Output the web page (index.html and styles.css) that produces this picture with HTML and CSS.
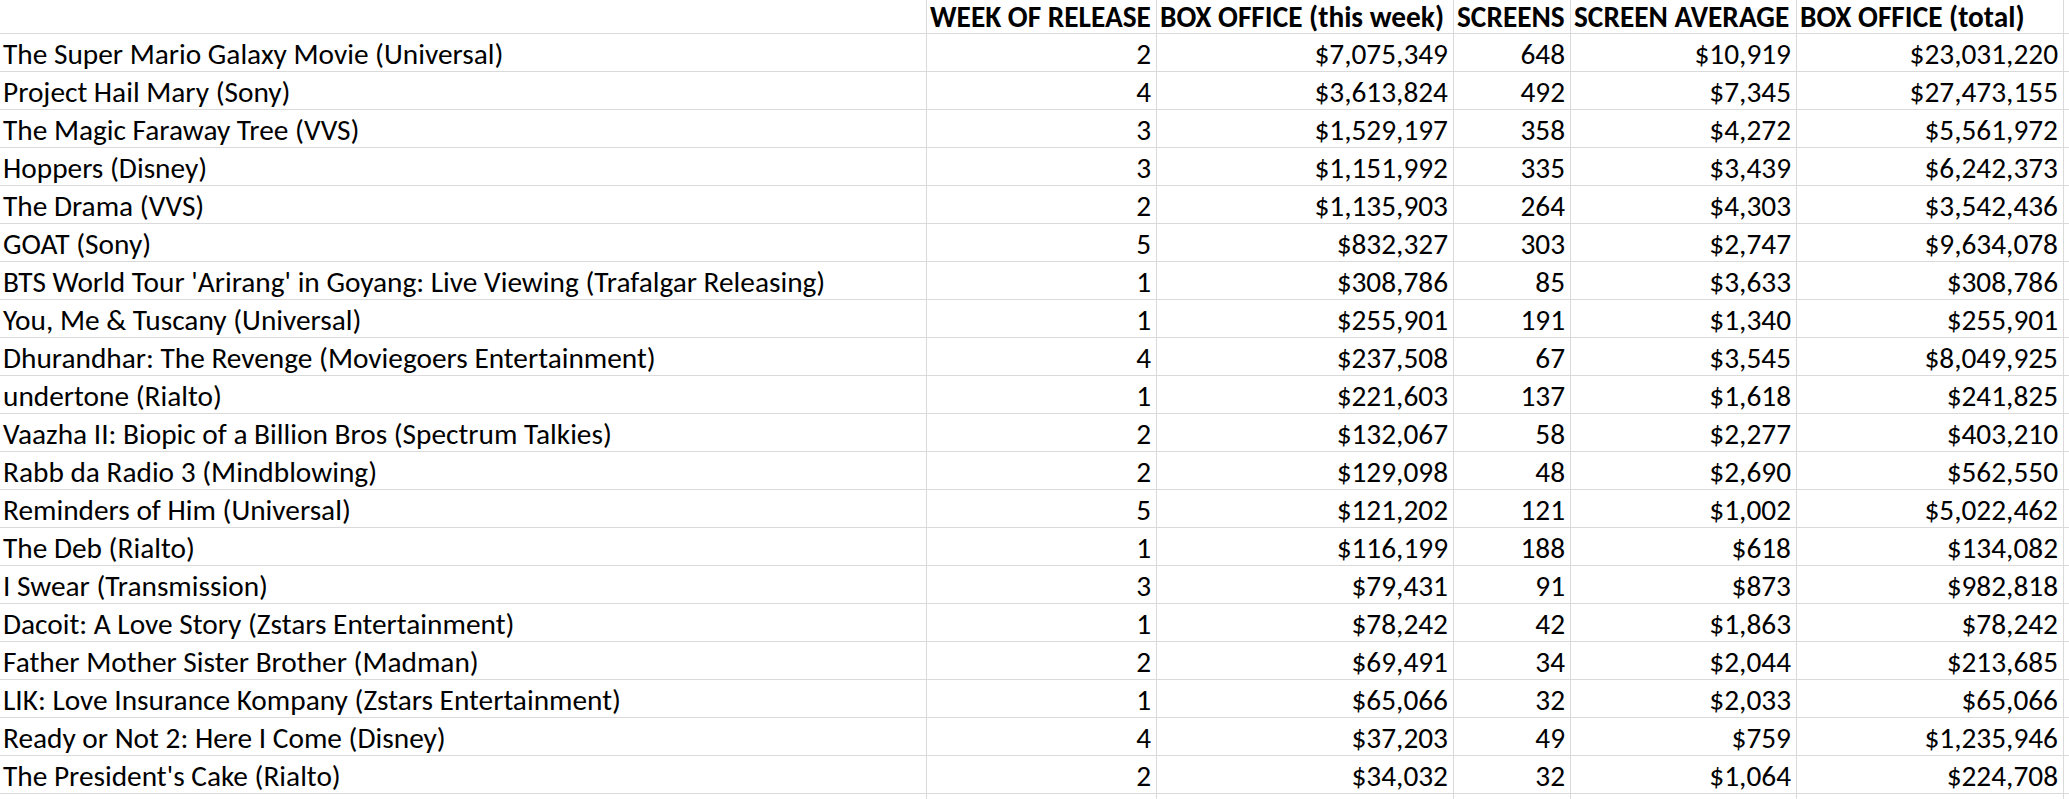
FILE: index.html
```html
<!DOCTYPE html>
<html lang="en">
<head>
<meta charset="utf-8">
<title>Box Office</title>
<link rel="stylesheet" href="styles.css">
</head>
<body>
<div class="sheet">
  <div class="row head">
    <div class="cell"></div>
    <div class="cell">WEEK OF RELEASE</div>
    <div class="cell">BOX OFFICE (this week)</div>
    <div class="cell">SCREENS</div>
    <div class="cell">SCREEN AVERAGE</div>
    <div class="cell">BOX OFFICE (total)</div>
    <div class="cell"></div>
  </div>
  <div class="row"><div class="cell">The Super Mario Galaxy Movie (Universal)</div><div class="cell num">2</div><div class="cell num">$7,075,349</div><div class="cell num">648</div><div class="cell num">$10,919</div><div class="cell num">$23,031,220</div><div class="cell"></div></div>
  <div class="row"><div class="cell">Project Hail Mary (Sony)</div><div class="cell num">4</div><div class="cell num">$3,613,824</div><div class="cell num">492</div><div class="cell num">$7,345</div><div class="cell num">$27,473,155</div><div class="cell"></div></div>
  <div class="row"><div class="cell">The Magic Faraway Tree (VVS)</div><div class="cell num">3</div><div class="cell num">$1,529,197</div><div class="cell num">358</div><div class="cell num">$4,272</div><div class="cell num">$5,561,972</div><div class="cell"></div></div>
  <div class="row"><div class="cell">Hoppers (Disney)</div><div class="cell num">3</div><div class="cell num">$1,151,992</div><div class="cell num">335</div><div class="cell num">$3,439</div><div class="cell num">$6,242,373</div><div class="cell"></div></div>
  <div class="row"><div class="cell">The Drama (VVS)</div><div class="cell num">2</div><div class="cell num">$1,135,903</div><div class="cell num">264</div><div class="cell num">$4,303</div><div class="cell num">$3,542,436</div><div class="cell"></div></div>
  <div class="row"><div class="cell">GOAT (Sony)</div><div class="cell num">5</div><div class="cell num">$832,327</div><div class="cell num">303</div><div class="cell num">$2,747</div><div class="cell num">$9,634,078</div><div class="cell"></div></div>
  <div class="row"><div class="cell">BTS World Tour 'Arirang' in Goyang: Live Viewing (Trafalgar Releasing)</div><div class="cell num">1</div><div class="cell num">$308,786</div><div class="cell num">85</div><div class="cell num">$3,633</div><div class="cell num">$308,786</div><div class="cell"></div></div>
  <div class="row"><div class="cell">You, Me &amp; Tuscany (Universal)</div><div class="cell num">1</div><div class="cell num">$255,901</div><div class="cell num">191</div><div class="cell num">$1,340</div><div class="cell num">$255,901</div><div class="cell"></div></div>
  <div class="row"><div class="cell">Dhurandhar: The Revenge (Moviegoers Entertainment)</div><div class="cell num">4</div><div class="cell num">$237,508</div><div class="cell num">67</div><div class="cell num">$3,545</div><div class="cell num">$8,049,925</div><div class="cell"></div></div>
  <div class="row"><div class="cell">undertone (Rialto)</div><div class="cell num">1</div><div class="cell num">$221,603</div><div class="cell num">137</div><div class="cell num">$1,618</div><div class="cell num">$241,825</div><div class="cell"></div></div>
  <div class="row"><div class="cell">Vaazha II: Biopic of a Billion Bros (Spectrum Talkies)</div><div class="cell num">2</div><div class="cell num">$132,067</div><div class="cell num">58</div><div class="cell num">$2,277</div><div class="cell num">$403,210</div><div class="cell"></div></div>
  <div class="row"><div class="cell">Rabb da Radio 3 (Mindblowing)</div><div class="cell num">2</div><div class="cell num">$129,098</div><div class="cell num">48</div><div class="cell num">$2,690</div><div class="cell num">$562,550</div><div class="cell"></div></div>
  <div class="row"><div class="cell">Reminders of Him (Universal)</div><div class="cell num">5</div><div class="cell num">$121,202</div><div class="cell num">121</div><div class="cell num">$1,002</div><div class="cell num">$5,022,462</div><div class="cell"></div></div>
  <div class="row"><div class="cell">The Deb (Rialto)</div><div class="cell num">1</div><div class="cell num">$116,199</div><div class="cell num">188</div><div class="cell num">$618</div><div class="cell num">$134,082</div><div class="cell"></div></div>
  <div class="row"><div class="cell">I Swear (Transmission)</div><div class="cell num">3</div><div class="cell num">$79,431</div><div class="cell num">91</div><div class="cell num">$873</div><div class="cell num">$982,818</div><div class="cell"></div></div>
  <div class="row"><div class="cell">Dacoit: A Love Story (Zstars Entertainment)</div><div class="cell num">1</div><div class="cell num">$78,242</div><div class="cell num">42</div><div class="cell num">$1,863</div><div class="cell num">$78,242</div><div class="cell"></div></div>
  <div class="row"><div class="cell">Father Mother Sister Brother (Madman)</div><div class="cell num">2</div><div class="cell num">$69,491</div><div class="cell num">34</div><div class="cell num">$2,044</div><div class="cell num">$213,685</div><div class="cell"></div></div>
  <div class="row"><div class="cell">LIK: Love Insurance Kompany (Zstars Entertainment)</div><div class="cell num">1</div><div class="cell num">$65,066</div><div class="cell num">32</div><div class="cell num">$2,033</div><div class="cell num">$65,066</div><div class="cell"></div></div>
  <div class="row"><div class="cell">Ready or Not 2: Here I Come (Disney)</div><div class="cell num">4</div><div class="cell num">$37,203</div><div class="cell num">49</div><div class="cell num">$759</div><div class="cell num">$1,235,946</div><div class="cell"></div></div>
  <div class="row"><div class="cell">The President's Cake (Rialto)</div><div class="cell num">2</div><div class="cell num">$34,032</div><div class="cell num">32</div><div class="cell num">$1,064</div><div class="cell num">$224,708</div><div class="cell"></div></div>
  <div class="row"><div class="cell"></div><div class="cell"></div><div class="cell"></div><div class="cell"></div><div class="cell"></div><div class="cell"></div><div class="cell"></div></div>
</div>
</body>
</html>
```
FILE: styles.css
```css
html, body {
  margin: 0;
  padding: 0;
  background: #ffffff;
}
body {
  width: 2069px;
  height: 799px;
  overflow: hidden;
  font-family: "Carlito", "Lato", "Liberation Sans", sans-serif;
  font-size: 29.33px;
  color: #000000;
}
.sheet {
  display: flex;
  flex-direction: column;
}
.row {
  display: grid;
  grid-template-columns: 927px 230px 297px 117px 226px 267px 1fr;
  height: 38px;
}
.row.head {
  height: 34px;
}
.cell {
  box-sizing: border-box;
  border-right: 1px solid #dadada;
  border-bottom: 1px solid #dadada;
  padding: 5px 5px 0 3px;
  line-height: 30px;
  white-space: nowrap;
}
.head .cell {
  font-weight: bold;
  padding-top: 2px;
}
.num {
  text-align: right;
}
```
